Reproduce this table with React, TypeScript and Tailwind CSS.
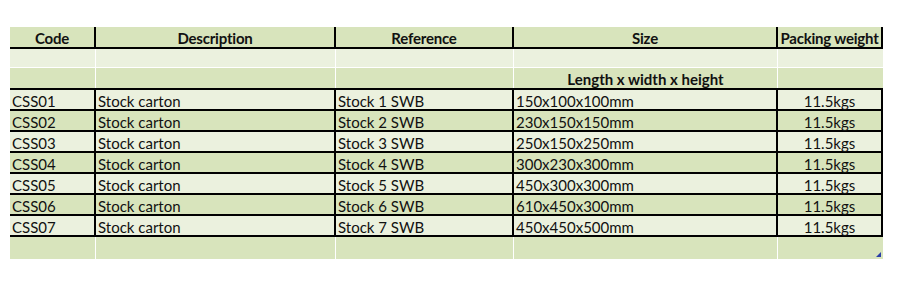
import React from 'react'

type Item = {
  code: string
  description: string
  reference: string
  size: string
  weight: string
}

const items: Item[] = [
  { code: 'CSS01', description: 'Stock carton', reference: 'Stock 1 SWB', size: '150x100x100mm', weight: '11.5kgs' },
  { code: 'CSS02', description: 'Stock carton', reference: 'Stock 2 SWB', size: '230x150x150mm', weight: '11.5kgs' },
  { code: 'CSS03', description: 'Stock carton', reference: 'Stock 3 SWB', size: '250x150x250mm', weight: '11.5kgs' },
  { code: 'CSS04', description: 'Stock carton', reference: 'Stock 4 SWB', size: '300x230x300mm', weight: '11.5kgs' },
  { code: 'CSS05', description: 'Stock carton', reference: 'Stock 5 SWB', size: '450x300x300mm', weight: '11.5kgs' },
  { code: 'CSS06', description: 'Stock carton', reference: 'Stock 6 SWB', size: '610x450x300mm', weight: '11.5kgs' },
  { code: 'CSS07', description: 'Stock carton', reference: 'Stock 7 SWB', size: '450x450x500mm', weight: '11.5kgs' },
]

const cols = 'grid grid-cols-[86px_240px_178px_264px_105px]'

export default function App() {
  return (
    <div className="w-[900px] h-[283px] bg-white pt-[27px] pl-[10px] font-['Lato',sans-serif] text-[15px] text-[#111]">
      <div className="w-[873px]">
        {/* header */}
        <div className={`${cols} h-[22px] bg-[#d8e4bc] border-b-2 border-black font-bold`}>
          {['Code', 'Description', 'Reference', 'Size', 'Packing weight'].map((h) => (
            <div key={h} className="flex items-center justify-center pt-[2px] border-r-2 border-black leading-none whitespace-nowrap tracking-[-0.2px]">
              {h}
            </div>
          ))}
        </div>

        {/* blank spacer row */}
        <div className={`${cols} h-[19px] bg-[#ebf1de] border-b border-white`}>
          {[0, 1, 2, 3, 4].map((i) => (
            <div key={i} className={i < 4 ? 'border-r border-white' : ''} />
          ))}
        </div>

        {/* sub header */}
        <div className={`${cols} h-[22px] bg-[#d8e4bc] border-b-2 border-black font-bold`}>
          <div className="border-r border-white" />
          <div className="border-r border-white" />
          <div className="border-r border-white" />
          <div className="flex items-center justify-center pt-[3px] border-r border-white leading-none">Length x width x height</div>
          <div />
        </div>

        {items.map((it, i) => (
          <div
            key={it.code}
            className={`${cols} h-[21px] border-b-2 border-black ${i % 2 === 0 ? 'bg-[#ebf1de]' : 'bg-[#d8e4bc]'}`}
          >
            <div className="flex items-center pl-[2px] pt-[3px] border-r-2 border-black leading-none">{it.code}</div>
            <div className="flex items-center pl-[2px] pt-[3px] border-r-2 border-black leading-none">{it.description}</div>
            <div className="flex items-center pl-[2px] pt-[3px] border-r-2 border-black leading-none">{it.reference}</div>
            <div className="flex items-center pl-[2px] pt-[3px] border-r-2 border-black leading-none">{it.size}</div>
            <div className="flex items-center justify-center pt-[3px] border-r-2 border-black leading-none">{it.weight}</div>
          </div>
        ))}

        {/* trailing blank row */}
        <div className={`${cols} h-[22px] bg-[#d8e4bc] relative`}>
          {[0, 1, 2, 3, 4].map((i) => (
            <div key={i} className={i < 4 ? 'border-r border-white' : ''} />
          ))}
          <svg className="absolute right-[2px] bottom-[2px]" width="5" height="5" viewBox="0 0 5 5">
            <path d="M5 0V5H0Z" fill="#2b3fa8" />
          </svg>
        </div>
      </div>
    </div>
  )
}
